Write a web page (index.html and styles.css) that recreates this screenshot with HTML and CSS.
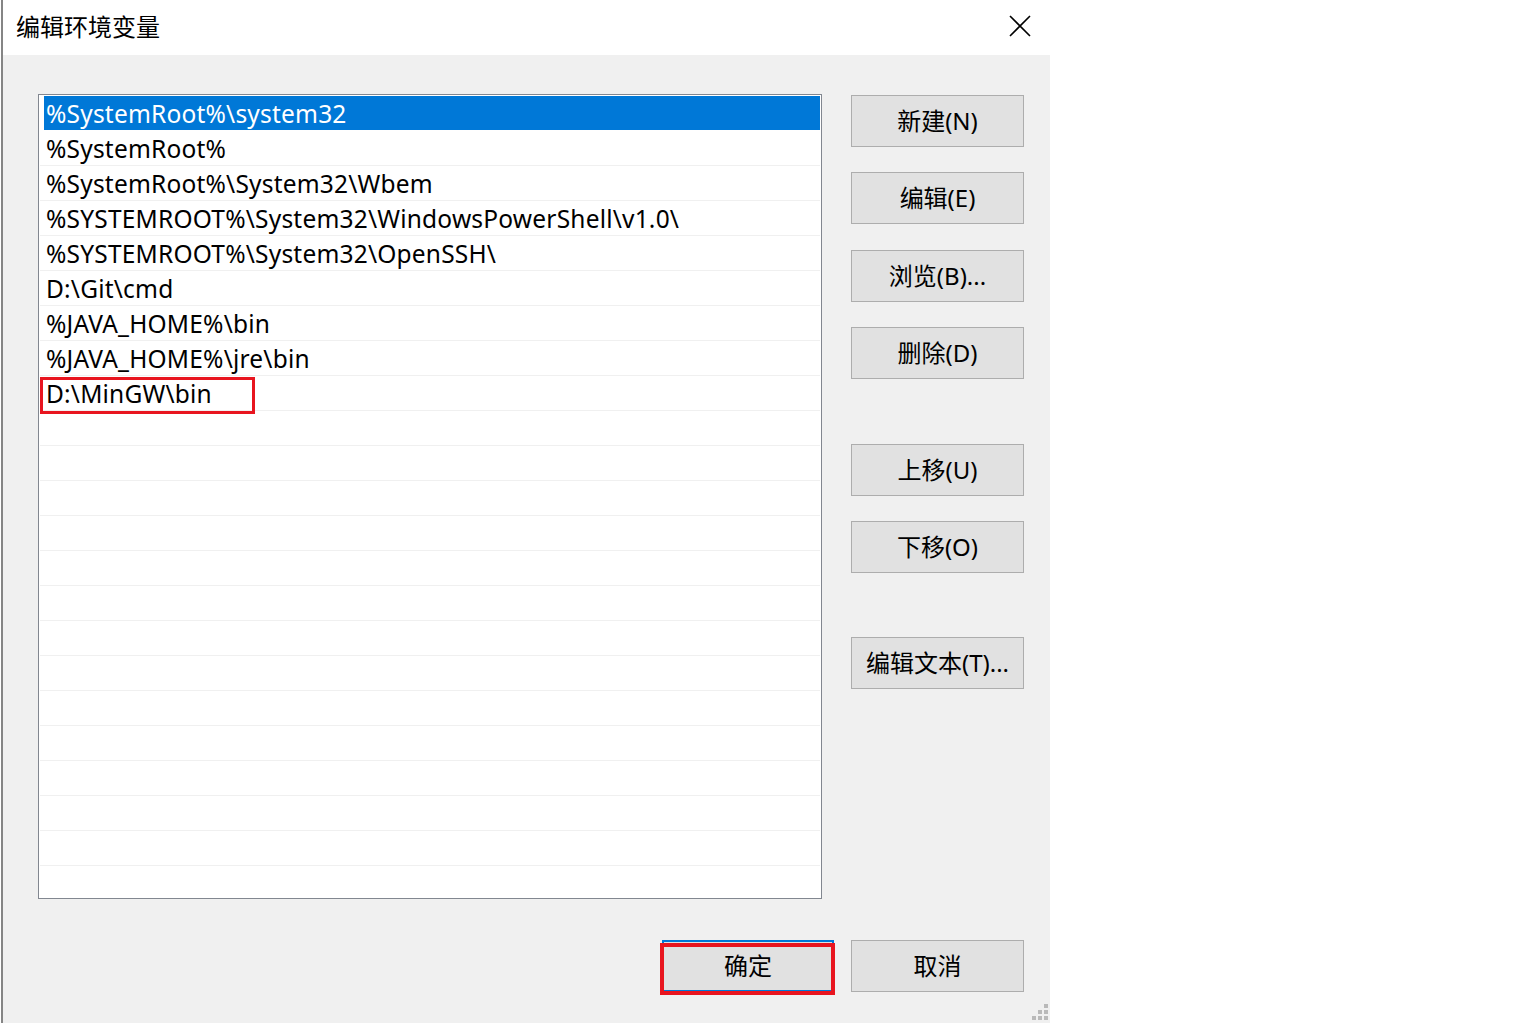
FILE: index.html
```html
<!DOCTYPE html>
<html lang="zh-CN">
<head>
    <meta charset="UTF-8">
    <meta name="viewport" content="width=device-width, initial-scale=1.0">
    <title>编辑环境变量</title>
    <link rel="stylesheet" href="styles.css">
</head>
<body>
    <div class="desktop">
        <div class="edge"></div>
        <div class="dialog">
            <div class="titlebar">
                <span class="title">编辑环境变量</span>
                <span class="close">
                    <svg width="22" height="22" viewBox="0 0 22 22">
                        <path d="M1 1 L21 21 M21 1 L1 21" stroke="#000" stroke-width="1.6" fill="none"/>
                    </svg>
                </span>
            </div>
            <div class="client">
                <div class="main">
                    <div class="list">
                        <div class="row selected"><span class="cell">%SystemRoot%\system32</span></div>
                        <div class="row"><span class="cell">%SystemRoot%</span></div>
                        <div class="row"><span class="cell">%SystemRoot%\System32\Wbem</span></div>
                        <div class="row"><span class="cell">%SYSTEMROOT%\System32\WindowsPowerShell\v1.0\</span></div>
                        <div class="row"><span class="cell">%SYSTEMROOT%\System32\OpenSSH\</span></div>
                        <div class="row"><span class="cell">D:\Git\cmd</span></div>
                        <div class="row"><span class="cell">%JAVA_HOME%\bin</span></div>
                        <div class="row"><span class="cell">%JAVA_HOME%\jre\bin</span></div>
                        <div class="row marked"><span class="cell">D:\MinGW\bin</span><span class="mark"></span></div>
                        <div class="row"></div>
                        <div class="row"></div>
                        <div class="row"></div>
                        <div class="row"></div>
                        <div class="row"></div>
                        <div class="row"></div>
                        <div class="row"></div>
                        <div class="row"></div>
                        <div class="row"></div>
                        <div class="row"></div>
                        <div class="row"></div>
                        <div class="row"></div>
                        <div class="row"></div>
                    </div>
                    <div class="side">
                        <button class="btn first">新建(N)</button>
                        <button class="btn">编辑(E)</button>
                        <button class="btn step">浏览(B)...</button>
                        <button class="btn">删除(D)</button>
                        <button class="btn group">上移(U)</button>
                        <button class="btn">下移(O)</button>
                        <button class="btn group2">编辑文本(T)...</button>
                    </div>
                </div>
                <div class="footer">
                    <div class="ok-wrap">
                        <button class="btn default">确定</button>
                        <span class="ok-mark"></span>
                    </div>
                    <button class="btn">取消</button>
                </div>
                <svg class="grip" width="16" height="16" viewBox="0 0 16 16">
                    <rect x="12" y="0" width="4" height="4" fill="#b9b9b9"/>
                    <rect x="6" y="6" width="4" height="4" fill="#b9b9b9"/>
                    <rect x="12" y="6" width="4" height="4" fill="#b9b9b9"/>
                    <rect x="0" y="12" width="4" height="4" fill="#b9b9b9"/>
                    <rect x="6" y="12" width="4" height="4" fill="#b9b9b9"/>
                    <rect x="12" y="12" width="4" height="4" fill="#b9b9b9"/>
                </svg>
            </div>
        </div>
    </div>
</body>
</html>
```

FILE: styles.css
```css
body {
    margin: 0;
    background-color: white;
    font-family: "Noto Sans", "Noto Sans CJK SC", sans-serif;
    color: #000;
}
.desktop {
    display: flex;
    height: 1023px;
    overflow: hidden;
}
.edge {
    width: 2px;
    margin-left: 1px;
    background-color: #858585;
}
.dialog {
    width: 1047px;
    display: flex;
    flex-direction: column;
}
.titlebar {
    height: 55px;
    background-color: white;
    display: flex;
    align-items: center;
    justify-content: space-between;
    padding: 0 19px 0 13px;
}
.title {
    font-family: "Noto Sans CJK SC", sans-serif;
    font-size: 24px;
    line-height: 1;
    margin-bottom: 4px;
}
.close {
    display: flex;
    margin-bottom: 3px;
}
.client {
    position: relative;
    flex: 1;
    background-color: #f0f0f0;
    padding: 39px 26px 0 35px;
}
.main {
    display: flex;
    gap: 29px;
}
.list {
    width: 784px;
    height: 805px;
    box-sizing: border-box;
    border: 1px solid #828790;
    background-color: white;
    padding: 1px 1px 0 1px;
    overflow: hidden;
}
.row {
    position: relative;
    height: 35px;
    box-sizing: border-box;
    border-bottom: 1px solid #f0f0f0;
    padding-left: 4px;
    font-size: 24.5px;
    line-height: 34px;
    white-space: nowrap;
}
.cell {
    display: block;
    padding: 1px 0 0 2px;
    height: 34px;
    box-sizing: border-box;
    line-height: 34px;
    letter-spacing: 0.2px;
}
.row.selected {
    border-bottom-color: white;
}
.row.selected .cell {
    background-color: #0078d7;
    color: white;
}
.mark {
    position: absolute;
    left: 0;
    top: 1px;
    width: 215px;
    height: 37px;
    box-sizing: border-box;
    border: 3px solid #e8151f;
}
.side {
    display: flex;
    flex-direction: column;
    padding-top: 1px;
}
.btn {
    width: 173px;
    height: 52px;
    box-sizing: border-box;
    border: 1px solid #adadad;
    background-color: #e1e1e1;
    font-family: "Noto Sans", "Noto Sans CJK SC", sans-serif;
    font-size: 24px;
    color: #000;
    padding: 0 0 3px 0;
    margin-top: 25px;
}
.btn.first {
    margin-top: 0;
}
.btn.step {
    margin-top: 26px;
}
.btn.group {
    margin-top: 65px;
}
.btn.group2 {
    margin-top: 64px;
}
.footer {
    display: flex;
    justify-content: flex-end;
    gap: 17px;
    margin-top: 41px;
}
.footer .btn {
    margin-top: 0;
}
.ok-wrap {
    position: relative;
}
.btn.default {
    width: 172px;
    border: 2px solid #0078d7;
}
.ok-mark {
    position: absolute;
    left: -2px;
    top: 3px;
    width: 175px;
    height: 52px;
    box-sizing: border-box;
    border: 4px solid #e8151f;
}
.grip {
    position: absolute;
    right: 2px;
    bottom: 3px;
}
```
